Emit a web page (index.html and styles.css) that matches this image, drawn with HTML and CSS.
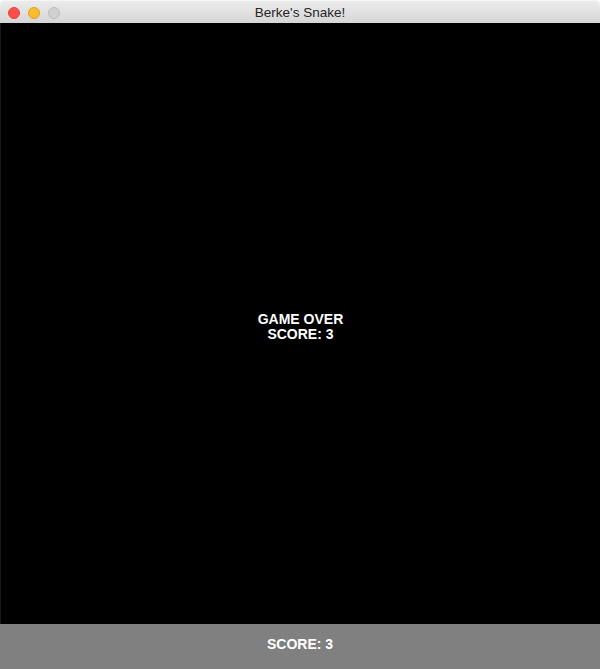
FILE: index.html
```html
<!DOCTYPE html>
<html>
<head>
<meta charset="utf-8">
<link rel="stylesheet" href="styles.css">
</head>
<body>
<div class="window">
  <div class="titlebar">
    <div class="lights">
      <span class="light red"></span>
      <span class="light yellow"></span>
      <span class="light gray"></span>
    </div>
    <div class="title">Berke's Snake!</div>
  </div>
  <div class="board">
    <div class="msg">GAME OVER<br>SCORE: 3</div>
  </div>
  <div class="footer">SCORE: 3</div>
</div>
</body>
</html>
```
FILE: styles.css
```css
html, body {
  margin: 0;
  padding: 0;
  background: #ffffff;
}
.window {
  width: 600px;
  height: 669px;
  display: flex;
  flex-direction: column;
  font-family: "Liberation Sans", Arial, sans-serif;
}
.titlebar {
  height: 23px;
  flex: none;
  position: relative;
  background: linear-gradient(#ececec, #d6d6d6);
  border-radius: 5px 5px 0 0;
  box-shadow: inset 0 1px 0 #f6f6f6;
  display: flex;
  align-items: center;
  justify-content: center;
}
.lights {
  position: absolute;
  left: 8px;
  top: 7px;
  display: flex;
  gap: 8px;
}
.light {
  width: 12px;
  height: 12px;
  border-radius: 50%;
  box-sizing: border-box;
}
.red { background: #fc4f4a; border: 1px solid #e0443e; }
.yellow { background: #fdbc2e; border: 1px solid #dea123; }
.gray { background: #d0d0d0; border: 1px solid #bdbdbd; }
.title {
  font-size: 13.5px;
  color: #262626;
  padding-top: 2px;
}
.board {
  flex: 1;
  background: #000;
  border-left: 1px solid #1c1c1c;
  display: flex;
  align-items: center;
  justify-content: center;
  padding-top: 7px;
}
.msg {
  color: #fff;
  font-weight: bold;
  font-size: 14px;
  line-height: 15px;
  text-align: center;
}
.footer {
  height: 45px;
  flex: none;
  box-sizing: border-box;
  padding-bottom: 6px;
  background: #808080;
  color: #fff;
  font-weight: bold;
  font-size: 14px;
  display: flex;
  align-items: center;
  justify-content: center;
}
```
